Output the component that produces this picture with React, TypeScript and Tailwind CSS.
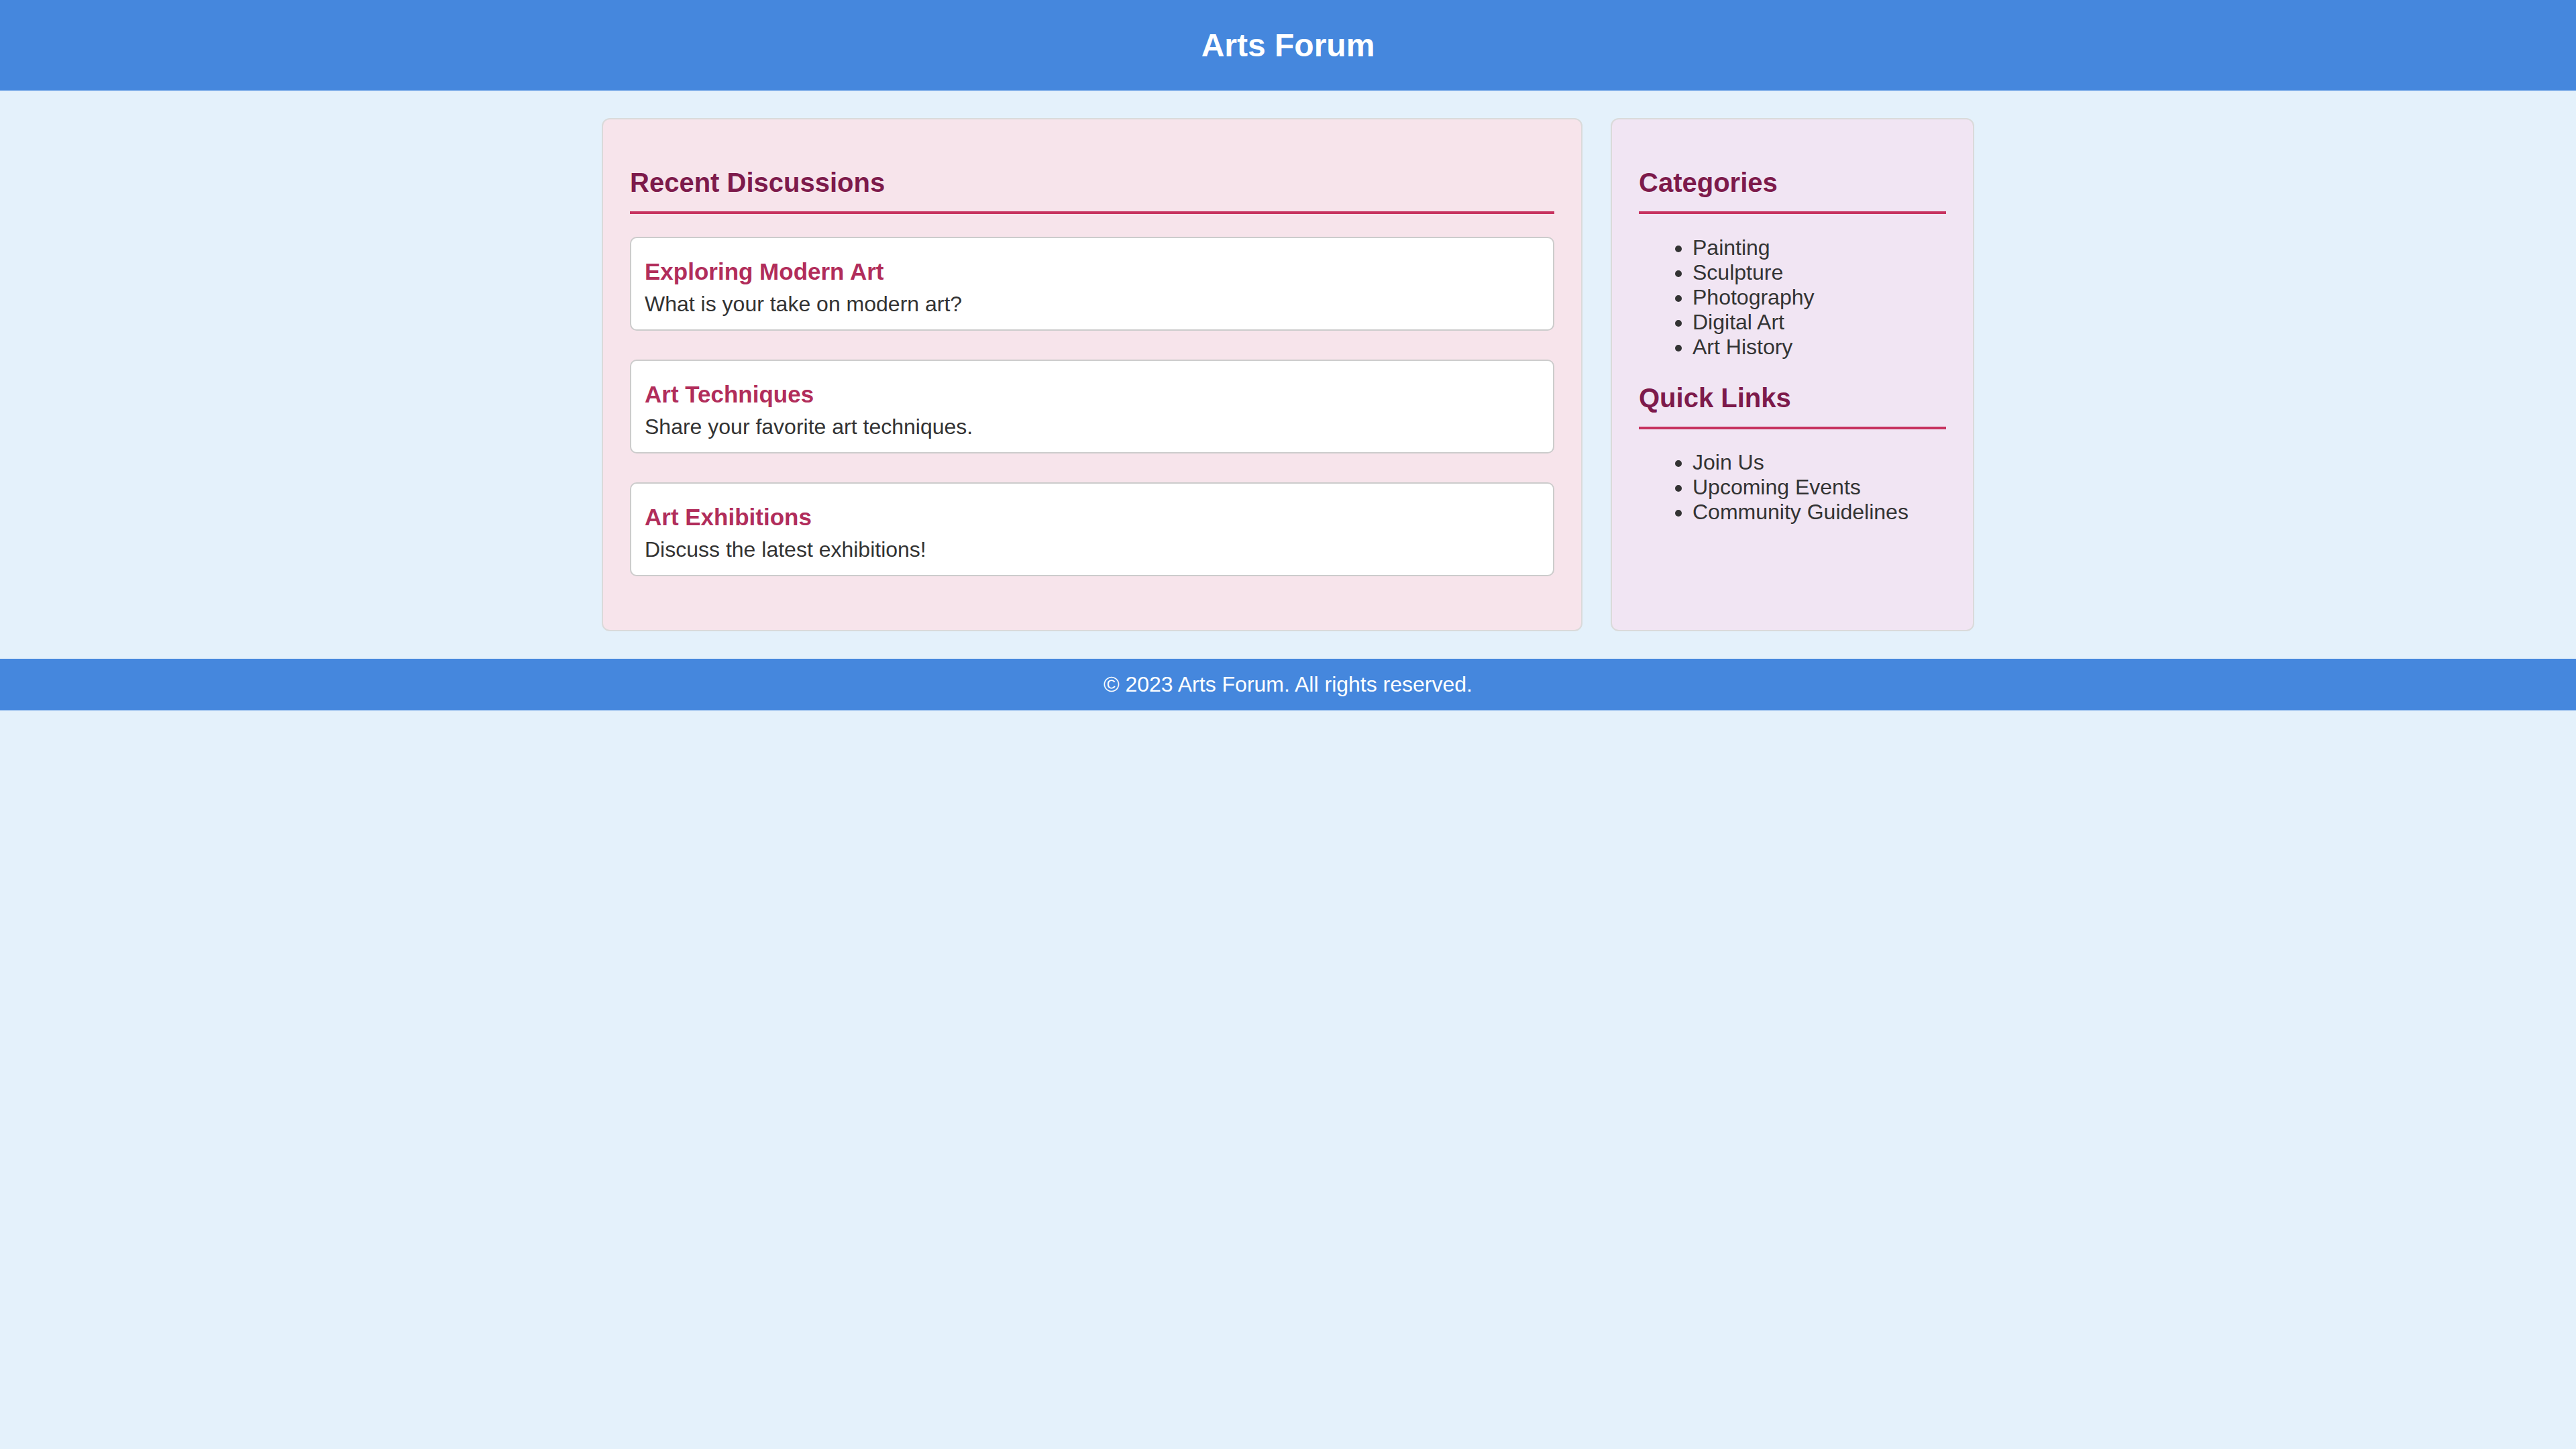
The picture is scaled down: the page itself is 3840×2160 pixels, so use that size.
const discussions = [
  { title: "Exploring Modern Art", text: "What is your take on modern art?" },
  { title: "Art Techniques", text: "Share your favorite art techniques." },
  { title: "Art Exhibitions", text: "Discuss the latest exhibitions!" },
];

const categories = ["Painting", "Sculpture", "Photography", "Digital Art", "Art History"];
const quickLinks = ["Join Us", "Upcoming Events", "Community Guidelines"];

function SectionTitle({ children, className = "" }: { children: React.ReactNode; className?: string }) {
  return (
    <h2
      className={`border-b-4 border-[#c7325f] pb-[20px] pt-[3px] text-[40px] font-bold leading-[46px] text-[#7d1a4b] ${className}`}
    >
      {children}
    </h2>
  );
}

function LinkList({ items, className = "" }: { items: string[]; className?: string }) {
  return (
    <ul className={`list-disc pl-[80px] text-[32px] leading-[37px] text-[#333] ${className}`}>
      {items.map((item) => (
        <li key={item}>{item}</li>
      ))}
    </ul>
  );
}

export default function App() {
  return (
    <div className="min-h-screen bg-[#e4f1fb] font-['Liberation_Sans',Arial,sans-serif] text-[#333]">
      <header className="bg-[#4587dd] py-[40px] text-center">
        <h1 className="text-[48px] font-bold leading-[55px] text-white">Arts Forum</h1>
      </header>

      <main className="mx-auto flex w-[2046px] gap-[42px] py-[41px]">
        <section className="flex-1 rounded-[12px] border-2 border-[#dadada] bg-[#f7e4eb] px-[40px] pb-[80px] pt-[68px]">
          <SectionTitle>Recent Discussions</SectionTitle>
          <div className="mt-[34px] flex flex-col gap-[43px]">
            {discussions.map((d) => (
              <article
                key={d.title}
                className="rounded-[10px] border-2 border-[#cccccc] bg-white px-[20px] pb-[19px] pt-[30px]"
              >
                <h3 className="text-[35px] font-bold leading-[40px] text-[#b12d5b]">{d.title}</h3>
                <p className="mt-[10px] text-[32px] leading-[37px] text-[#333]">{d.text}</p>
              </article>
            ))}
          </div>
        </section>

        <aside className="w-[542px] rounded-[12px] border-2 border-[#dadada] bg-[#f1e5f3] px-[40px] pb-[40px] pt-[68px]">
          <SectionTitle>Categories</SectionTitle>
          <LinkList items={categories} className="mt-[32px]" />
          <SectionTitle className="mt-[31px]">Quick Links</SectionTitle>
          <LinkList items={quickLinks} className="mt-[31px]" />
        </aside>
      </main>

      <footer className="bg-[#4587dd] py-[20px] text-center text-[32px] leading-[37px] text-white">
        © 2023 Arts Forum. All rights reserved.
      </footer>
    </div>
  );
}
